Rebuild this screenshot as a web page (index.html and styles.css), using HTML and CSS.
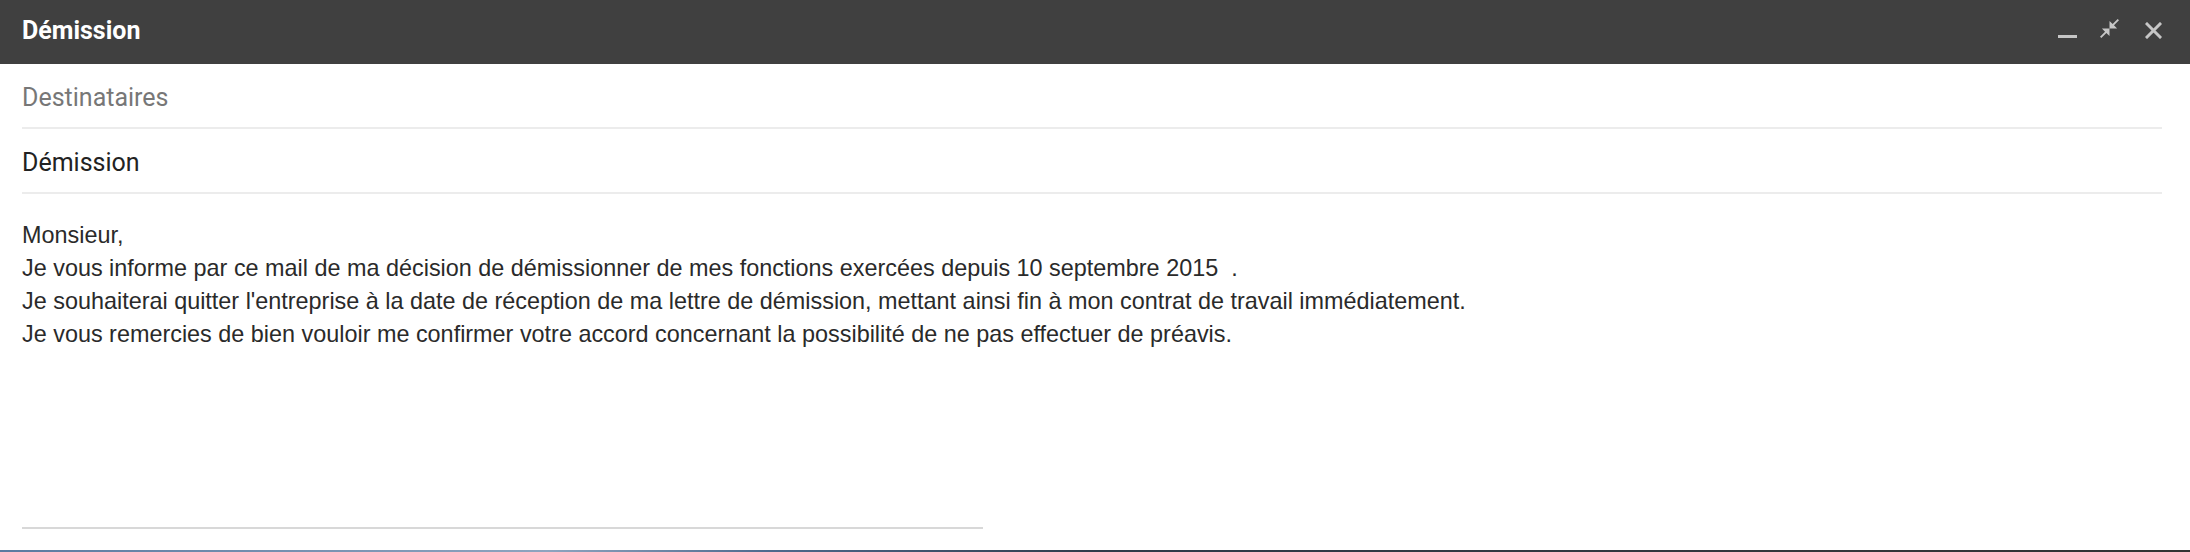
FILE: index.html
```html
<!DOCTYPE html>
<html lang="fr">
<head>
<meta charset="utf-8">
<title>Démission</title>
<link rel="stylesheet" href="styles.css">
</head>
<body>
<div class="compose">
  <header class="titlebar">
    <div class="title">Démission</div>
    <div class="actions">
      <svg class="ico ico-min" width="20" height="20" viewBox="0 0 20 20"><rect x="0" y="15" width="19" height="3" fill="currentColor"/></svg>
      <svg class="ico ico-exit" width="19" height="19" viewBox="2 2 20 20"><path fill="currentColor" d="M22 3.41L16.71 8.7 20 12h-8V4l3.29 3.29L20.59 2 22 3.41zM3.41 22l5.29-5.29L12 20v-8H4l3.29 3.29L2 20.59 3.41 22z"/></svg>
      <svg class="ico ico-close" width="17" height="17" viewBox="0 0 17 17"><path d="M2 2L15 15M15 2L2 15" stroke="currentColor" stroke-width="3" stroke-linecap="square"/></svg>
    </div>
  </header>
  <div class="field field-to">Destinataires</div>
  <div class="field field-subject">Démission</div>
  <div class="message">
    <div>Monsieur,</div>
    <div>Je vous informe par ce mail de ma décision de démissionner de mes fonctions exercées depuis 10 septembre 2015&nbsp; .</div>
    <div>Je souhaiterai quitter l'entreprise à la date de réception de ma lettre de démission, mettant ainsi fin à mon contrat de travail immédiatement.</div>
    <div>Je vous remercies de bien vouloir me confirmer votre accord concernant la possibilité de ne pas effectuer de préavis.</div>
  </div>
  <div class="signature-rule"></div>
  <div class="bottom-strip"></div>
</div>
</body>
</html>
```
FILE: styles.css
```css
html, body {
  margin: 0;
  padding: 0;
  background: #ffffff;
}

body {
  width: 2190px;
  height: 552px;
  overflow: hidden;
}

.compose {
  display: flex;
  flex-direction: column;
  height: 552px;
}

.titlebar {
  height: 64px;
  background: #404040;
  display: flex;
  align-items: center;
  padding: 0 28px 0 22px;
  flex-shrink: 0;
}

.title {
  flex: 1;
  font-family: Roboto, "Liberation Sans", sans-serif;
  font-weight: 700;
  font-size: 25px;
  color: #ffffff;
  padding-bottom: 4px;
}

.actions {
  align-self: stretch;
  display: flex;
  align-items: flex-start;
  padding-top: 19px;
  color: #c6c6c6;
}

.ico {
  display: block;
}

.ico-min {
  margin-top: 1px;
}

.ico-exit {
  margin-left: 22px;
}

.ico-close {
  margin-left: 26px;
  margin-top: 3px;
}

.field {
  margin: 0 28px 0 22px;
  height: 65px;
  flex-shrink: 0;
  box-sizing: border-box;
  padding-top: 3px;
  border-bottom: 2px solid #ececec;
  display: flex;
  align-items: center;
  font-family: Roboto, "Liberation Sans", sans-serif;
  font-size: 25px;
}

.field-to {
  color: #777777;
}

.field-subject {
  color: #222222;
}

.message {
  padding: 25px 22px 0 22px;
  font-family: "Liberation Sans", Arial, sans-serif;
  font-size: 23.4px;
  line-height: 33px;
  color: #2a2a2a;
  flex: 1;
}

.signature-rule {
  margin: 0 0 21px 22px;
  width: 961px;
  height: 2px;
  flex-shrink: 0;
  background: #d8d8d8;
}

.bottom-strip {
  height: 2px;
  flex-shrink: 0;
  background: linear-gradient(90deg, #5a7aa0 0%, #8ea4bf 25%, #4e6a8e 35%, #2f3b4a 50%, #333333 100%);
}
```
